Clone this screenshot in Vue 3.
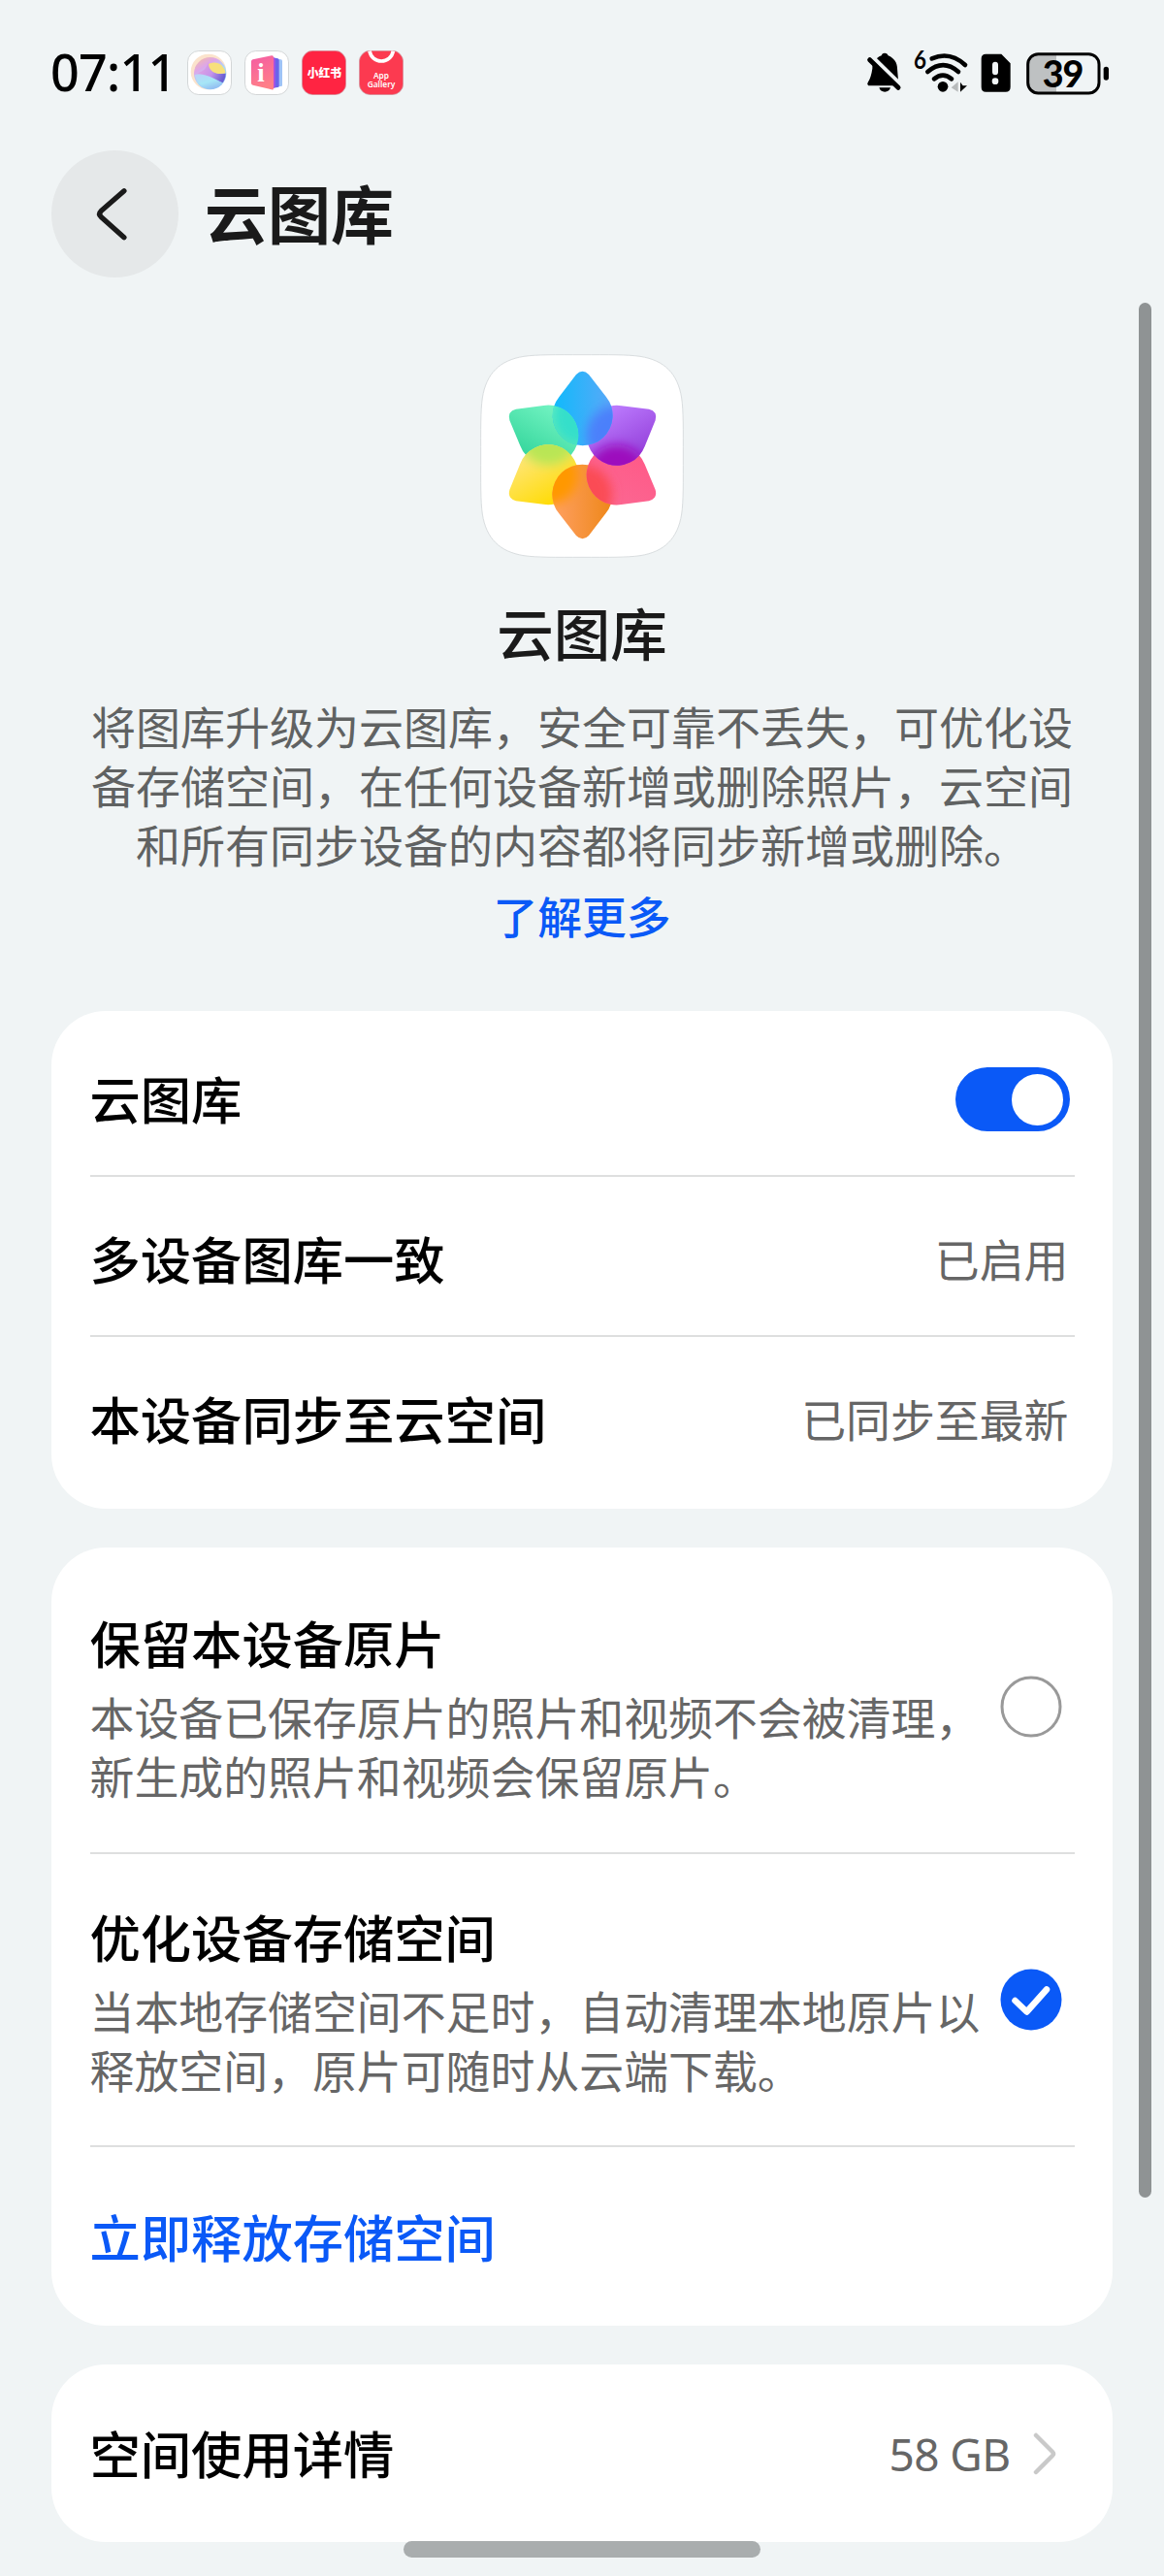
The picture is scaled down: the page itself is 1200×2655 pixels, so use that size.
<script setup>
const petalPath = 'M342 108 Q361.500 88 381 108 L434 176 A93 93 0 1 1 290 176 Z'

// Each petal lies over the next one in the ring; `mix` is the colour where they meet.
const petals = [
  { id: 'green', angle: -60, from: '#35d69c', to: '#74f4c3', under: 0, mix: '#36dfca' },
  { id: 'yellow', angle: -120, from: '#ffdb00', to: '#ffe67a', under: -60, mix: '#b9e654' },
  { id: 'orange', angle: 180, from: '#ee8718', to: '#ffa063', under: -120, mix: '#ff9800' },
  { id: 'red', angle: 120, from: '#ff5a88', to: '#fb6792', under: 180, mix: '#fb4b55' },
  { id: 'purple', angle: 60, from: '#bd7dff', to: '#9440da', under: 120, mix: '#9d0bbd' },
  { id: 'blue', angle: 0, from: '#0fbafb', to: '#5ba8f8', under: 60, mix: '#4c80fb' }
]
const turn = (angle) => `rotate(${angle} 361.500 357)`

const syncRows = [
  { title: '多设备图库一致', value: '已启用' },
  { title: '本设备同步至云空间', value: '已同步至最新' }
]

const options = [
  {
    title: '保留本设备原片',
    lines: ['本设备已保存原片的照片和视频不会被清理，', '新生成的照片和视频会保留原片。'],
    checked: false
  },
  {
    title: '优化设备存储空间',
    lines: ['当本地存储空间不足时，自动清理本地原片以', '释放空间，原片可随时从云端下载。'],
    checked: true
  }
]
</script>

<template>
  <div class="screen">
    <header class="status">
      <span class="time">07:11</span>
      <div class="apps">
        <svg viewBox="0 0 138 138" class="app">
          <defs>
            <linearGradient id="orb" x1="0" y1="0" x2="0.6" y2="1">
              <stop offset="0" stop-color="#f9bf98" /><stop offset="0.35" stop-color="#dda6ea" />
              <stop offset="0.65" stop-color="#a9dcf8" /><stop offset="1" stop-color="#8fc4f5" />
            </linearGradient>
            <linearGradient id="orbShade" x1="0" y1="0" x2="1" y2="0.4">
              <stop offset="0" stop-color="#eaa6e2" /><stop offset="0.6" stop-color="#c493ea" /><stop offset="1" stop-color="#6a5fd2" />
            </linearGradient>
            <linearGradient id="orbSea" x1="0.2" y1="0" x2="0.8" y2="1">
              <stop offset="0" stop-color="#b9d4f8" /><stop offset="0.5" stop-color="#a6e6f6" /><stop offset="1" stop-color="#8fb4f0" />
            </linearGradient>
            <clipPath id="orbClip"><circle cx="71" cy="71" r="48" /></clipPath>
          </defs>
          <rect x="1.500" y="1.500" width="135" height="135" rx="34" fill="#fff" stroke="#d3d6d7" stroke-width="3" />
          <circle cx="66" cy="66" r="55" fill="#fbe3cc" />
          <circle cx="71" cy="71" r="50" fill="url(#orb)" />
          <g clip-path="url(#orbClip)">
            <path d="M66 36 C72 70 96 76 124 70 L124 104 C100 96 66 86 30 70 C50 66 60 54 66 36Z" fill="url(#orbShade)" />
            <path d="M66 42 C90 30 112 42 120 70 C96 76 68 70 66 42Z" fill="#f7e07c" />
            <path d="M22 76 C50 66 84 86 112 102 C96 128 40 130 22 76Z" fill="url(#orbSea)" />
          </g>
        </svg>
        <svg viewBox="0 0 138 138" class="app">
          <defs>
            <linearGradient id="book" x1="0" y1="0" x2="0.3" y2="1">
              <stop offset="0" stop-color="#f45ba4" /><stop offset="1" stop-color="#ff7f88" />
            </linearGradient>
          </defs>
          <rect x="1.500" y="1.500" width="135" height="135" rx="34" fill="#fff" stroke="#d3d6d7" stroke-width="3" />
          <path d="M98 26 L113 28 Q117 29 117 33 V108 Q117 111 113 111 L98 112Z" fill="#9fc3f7" />
          <path d="M88 22 L103 25 Q107 26 107 30 V110 Q107 114 103 114 L88 116Z" fill="#6b63ea" />
          <path d="M78 18 L91 22 Q95 24 95 29 V112 Q95 116 91 116 L78 119Z" fill="#b04fe0" />
          <path d="M26 28 L84 16 Q90 15 90 21 V117 Q90 123 84 121 L26 107 Q21 106 21 101 V34 Q21 29 26 28Z" fill="url(#book)" />
          <text x="51" y="97" text-anchor="middle" class="book-letter">i</text>
        </svg>
        <svg viewBox="0 0 138 138" class="app">
          <rect x="1" y="1" width="136" height="136" rx="34" fill="#ff2442" stroke="#c9a5ab" stroke-width="2" />
          <text x="70" y="85" text-anchor="middle" textLength="106" lengthAdjust="spacingAndGlyphs" class="red-label">小红书</text>
        </svg>
        <svg viewBox="0 0 138 138" class="app">
          <rect x="1" y="1" width="136" height="136" rx="34" fill="#fc3a50" stroke="#c9a5ab" stroke-width="2" />
          <path d="M33 2 A37 37 0 0 0 106 2" fill="none" stroke="#fff" stroke-width="11" />
          <text x="69" y="86" text-anchor="middle" class="store-label">App</text>
          <text x="69" y="114" text-anchor="middle" textLength="86" class="store-label">Gallery</text>
        </svg>
      </div>
      <svg class="signals" viewBox="60 45 770 180">
        <path d="M126 74 C132 74 136 78 137 82 C156 90 165 105 165 122 L168 158 V175 H76 Q70 170 74 165 Q84 150 88 122 C88 105 96 90 116 82 C117 78 120 74 126 74Z" />
        <path d="M109 181 H144 Q140 194 126.500 194 Q113 194 109 181Z" />
        <path d="M84 82 L182 178" stroke="#f0f4f5" stroke-width="13" />
        <path d="M80 95 L168 181" stroke="#000" stroke-width="15" stroke-linecap="round" />
        <text x="216" y="123" textLength="39" lengthAdjust="spacingAndGlyphs" class="generation">6</text>
        <g fill="none" stroke="#000" stroke-width="14" stroke-linecap="round">
          <path d="M272 91 Q328 67 375 111" />
          <path d="M259 132 Q307 91 354 132" />
          <path d="M279 154 Q306 132 333 154" />
        </g>
        <circle cx="306" cy="178" r="16" />
        <path d="M332 181 L353 163 V194Z" fill="#b8bbbc" />
        <path d="M360 164 V194 L381 175 H368Z" />
        <path fill-rule="evenodd" d="M439 77 H487 L515 106 V179 Q515 194 500 194 H439 Q425 194 425 179 V91 Q425 77 439 77Z M468 101 Q459 101 459 110 V133 Q459 142 468 142 Q477 142 477 133 V110 Q477 101 468 101Z M468 151 A10 10 0 1 0 468 171 A10 10 0 1 0 468 151Z" />
        <path d="M600 77 H657 V198 H600 Q570 198 570 168 V107 Q570 77 600 77Z" fill="#bec1c2" />
        <rect x="569" y="77" width="220" height="121" rx="32" fill="none" stroke="#000" stroke-width="9" />
        <rect x="803" y="116" width="16" height="42" rx="8" />
        <text x="678" y="179" text-anchor="middle" textLength="128" class="charge">39</text>
      </svg>
    </header>

    <nav class="titlebar">
      <button class="back" aria-label="返回">
        <svg viewBox="0 0 132 132" fill="none" stroke="#1a1a1a" stroke-width="5.300" stroke-linecap="round" stroke-linejoin="round">
          <path d="M75.500 42 L51.500 63 Q48.500 66 51.500 69 L75.500 90.500" />
        </svg>
      </button>
      <h1>云图库</h1>
    </nav>

    <section class="hero">
      <svg class="logo" viewBox="45 45 630 630">
        <defs>
          <linearGradient v-for="p in petals" :id="p.id" :key="p.id">
            <stop offset="0" :stop-color="p.from" /><stop offset="1" :stop-color="p.to" />
          </linearGradient>
          <clipPath v-for="p in petals" :id="p.id + 'Clip'" :key="p.id">
            <path :d="petalPath" :transform="turn(p.angle)" />
          </clipPath>
          <filter id="soft" x="-25%" y="-25%" width="150%" height="150%"><feGaussianBlur stdDeviation="16" /></filter>
        </defs>
        <path d="M360 47 C440 47 500 46 540 52 C615 64 656 105 668 180 C674 220 673 280 673 360 C673 440 674 500 668 540 C656 615 615 656 540 668 C500 674 440 673 360 673 C280 673 220 674 180 668 C105 656 64 615 52 540 C46 500 47 440 47 360 C47 280 46 220 52 180 C64 105 105 64 180 52 C220 46 280 47 360 47Z" fill="#fff" stroke="#d9dddf" stroke-width="3" />
        <g v-for="p in petals" :key="p.id">
          <path :d="petalPath" :transform="turn(p.angle)" :fill="`url(#${p.id})`" />
          <g v-if="p.id !== 'green'" :clip-path="`url(#${p.id}Clip)`">
            <path :d="petalPath" :transform="turn(p.under)" :fill="p.mix" filter="url(#soft)" />
          </g>
        </g>
        <g clip-path="url(#blueClip)">
          <g clip-path="url(#greenClip)">
            <path :d="petalPath" :transform="turn(-60)" fill="url(#green)" />
            <path :d="petalPath" :fill="petals[0].mix" filter="url(#soft)" />
          </g>
        </g>
      </svg>
      <h2>云图库</h2>
      <p class="intro">将图库升级为云图库，安全可靠不丢失，可优化设<br>备存储空间，在任何设备新增或删除照片，云空间<br>和所有同步设备的内容都将同步新增或删除。</p>
      <a class="more">了解更多</a>
    </section>

    <main class="cards">
      <section class="card">
        <div class="row row-first">
          <span class="name">云图库</span>
          <span class="switch"><i></i></span>
        </div>
        <div v-for="row in syncRows" :key="row.title" class="row">
          <span class="name">{{ row.title }}</span>
          <span class="value">{{ row.value }}</span>
        </div>
      </section>

      <section class="card">
        <div v-for="option in options" :key="option.title" class="option">
          <div>
            <div class="name">{{ option.title }}</div>
            <div class="detail"><span v-for="line in option.lines" :key="line">{{ line }}</span></div>
          </div>
          <svg class="radio" viewBox="0 0 64 64">
            <template v-if="option.checked">
              <circle cx="32" cy="32" r="31.500" fill="#0a59f7" />
              <path d="M15.500 33 L27.500 44.500 L48 21.500" fill="none" stroke="#fff" stroke-width="6.500" stroke-linecap="round" stroke-linejoin="round" />
            </template>
            <circle v-else cx="32" cy="32" r="30" fill="none" stroke="#999" stroke-width="3" />
          </svg>
        </div>
        <div class="row row-action"><a class="name">立即释放存储空间</a></div>
      </section>

      <section class="card">
        <div class="row row-usage">
          <span class="name">空间使用详情</span>
          <span class="usage">
            <span class="size">58 GB</span>
            <svg viewBox="0 0 24 44" fill="none" stroke="#c9c9c9" stroke-width="4.500" stroke-linecap="round" stroke-linejoin="round">
              <path d="M3 3 L20 20 Q22 22 20 24 L3 41" />
            </svg>
          </span>
        </div>
      </section>
    </main>

    <div class="scrollbar"></div>
    <div class="home-indicator"></div>
  </div>
</template>

<style>
html,
body {
  background: #f0f4f5;
}
</style>

<style scoped>
.screen {
  position: relative;
  box-sizing: border-box;
  width: 1200px;
  height: 2655px;
  overflow: hidden;
  background: #f0f4f5;
  font-family: "Noto Sans CJK SC", "Noto Sans", sans-serif;
  color: #000;
}
.status {
  display: flex;
  align-items: center;
  box-sizing: border-box;
  height: 154px;
  padding: 0 53px 4px 52px;
}
.time {
  width: 141px;
  margin-bottom: 3px;
  font: 500 52px/60px "Noto Sans", sans-serif;
  letter-spacing: -0.700px;
}
.apps {
  display: flex;
  gap: 13px;
}
.app {
  width: 46px;
  height: 46px;
}
.book-letter {
  font: bold 80px "Liberation Serif", serif;
  fill: #fff;
}
.red-label {
  font: 900 37px "Noto Sans CJK SC", sans-serif;
  fill: #fff;
}
.store-label {
  font: 600 25px "Noto Sans", sans-serif;
  fill: #fff;
}
.signals {
  width: 256.700px;
  height: 60px;
  margin-left: auto;
}
.generation {
  font: bold 78px Lato, sans-serif;
}
.charge {
  font: 900 113px Lato, sans-serif;
}
.titlebar {
  display: flex;
  align-items: center;
  height: 132px;
  padding-left: 53px;
}
.back {
  width: 131px;
  height: 131px;
  padding: 0;
  border: 0;
  border-radius: 50%;
  background: #e5e8e9;
}
.back svg {
  display: block;
  width: 131px;
}
h1 {
  margin: 0 0 4px 27px;
  font-size: 65px;
  line-height: 80px;
  font-weight: 700;
  color: #1a1a1a;
}
.hero {
  display: flex;
  flex-direction: column;
  align-items: center;
  height: 756px;
  padding-top: 79px;
  box-sizing: border-box;
  text-align: center;
}
.logo {
  width: 210px;
  height: 210px;
}
h2 {
  margin: 36px 0 0;
  font-size: 58.500px;
  line-height: 80px;
  font-weight: 500;
  color: #1a1a1a;
}
.intro {
  margin: 26px 0 0;
  font-size: 46px;
  line-height: 61px;
  white-space: nowrap;
  color: #606262;
}
.more {
  margin-top: 13px;
  font-size: 45.800px;
  line-height: 61px;
  font-weight: 500;
  color: #0a59f7;
}
.cards {
  display: flex;
  flex-direction: column;
  gap: 40px;
  padding: 0 53px;
}
.card {
  padding: 0 39.500px;
  border-radius: 56px;
  background: #fff;
}
.row {
  display: flex;
  align-items: center;
  justify-content: space-between;
  box-sizing: border-box;
  height: 165px;
  padding: 2px 5px 0 0;
  border-bottom: 2px solid #dedfdf;
}
.row-first {
  height: 171px;
  padding-top: 13px;
}
.row-first .name {
  margin-bottom: 4px;
}
.row:last-child {
  height: 177px;
  padding-bottom: 13px;
  border-bottom: 0;
}
.name {
  font-size: 52.300px;
  line-height: 70px;
  font-weight: 500;
  white-space: nowrap;
}
.value {
  padding-right: 1px;
  font-size: 45.900px;
  line-height: 70px;
  color: #666;
}
.switch {
  display: flex;
  justify-content: flex-end;
  box-sizing: border-box;
  width: 118px;
  height: 66px;
  padding: 6.500px;
  border-radius: 33px;
  background: #0a59f7;
}
.switch i {
  width: 53px;
  height: 53px;
  border-radius: 50%;
  background: #fff;
}
.option {
  display: flex;
  align-items: center;
  justify-content: space-between;
  box-sizing: border-box;
  height: 302px;
  padding-right: 12.500px;
  border-bottom: 2px solid #dedfdf;
}
.option:first-child {
  height: 316px;
  padding-top: 13px;
}
.detail {
  display: flex;
  flex-direction: column;
  margin-top: 11px;
  font-size: 45.900px;
  line-height: 61px;
  white-space: nowrap;
  color: #666;
}
.radio {
  width: 64px;
  height: 64px;
  flex: none;
}
.row-action.row:last-child {
  height: 184px;
  padding-bottom: 5px;
}
.row-action .name {
  color: #0a59f7;
}
.row-usage.row:last-child {
  height: 183px;
  padding: 0 19px 0 0;
}
.row-usage .name {
  margin-bottom: 4px;
}
.usage {
  display: flex;
  align-items: center;
  gap: 23px;
}
.usage svg {
  width: 24px;
  height: 44px;
}
.size {
  font-family: "Noto Sans", sans-serif;
  font-size: 46px;
  letter-spacing: -0.600px;
  color: #666;
}
.scrollbar {
  position: absolute;
  left: 1174px;
  top: 312px;
  width: 13px;
  height: 1953px;
  border-radius: 7px;
  background: #8f9394;
}
.home-indicator {
  position: absolute;
  left: 416px;
  top: 2619px;
  width: 368px;
  height: 17px;
  border-radius: 9px;
  background: #a9adae;
}
</style>
